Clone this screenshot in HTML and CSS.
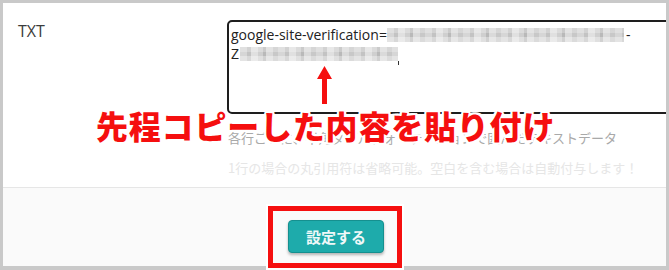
FILE: index.html
```html
<!DOCTYPE html>
<html lang="ja">
<head>
<meta charset="utf-8">
<link rel="stylesheet" href="styles.css">
</head>
<body>
<div class="page">
  <div class="frame">
    <div class="row">
      <div class="label">TXT</div>
      <div class="field">
        <div class="textarea">google-site-verification=<span class="blur b1"></span>-<br>Z<span class="blur b2"></span><span class="caret"></span></div>
        <p class="help">各行ごとに、半角ダブルクォーテーションで囲んだテキストデータ</p>
        <p class="help faint">1行の場合の丸引用符は省略可能。空白を含む場合は自動付与します！</p>
      </div>
    </div>
    <div class="footer">
      <button class="btn">設定する</button>
    </div>
  </div>
  <div class="annot-text">先程コピーした内容を貼り付け</div>
  <svg class="annot-arrow" width="15" height="38" viewBox="0 0 15 38">
    <polygon points="7.5,0 15,13 10,13 10,38 5,38 5,13 0,13" fill="#f50f0f"/>
  </svg>
  <div class="annot-box"></div>
</div>
</body>
</html>
```

FILE: styles.css
```css
* { box-sizing: border-box; }
html, body { margin: 0; padding: 0; background: #fff; }
.page {
  position: relative;
  width: 669px;
  height: 270px;
  overflow: hidden;
  font-family: "Open Sans", "Noto Sans CJK JP", sans-serif;
}
.frame {
  width: 669px;
  height: 270px;
  border: 3px solid #c9c9c9;
  border-bottom-width: 4px;
  background: #fff;
  overflow: hidden;
  display: flex;
  flex-direction: column;
}
.row {
  height: 184px;
  display: flex;
  padding: 17px 0 0 15px;
}
.label {
  width: 209px;
  flex: none;
  font-size: 16px;
  line-height: 18px;
  color: #3c3c3c;
  padding-top: 2px;
}
.field {
  flex: 1;
  min-width: 0;
}
.textarea {
  width: calc(100% + 12px);
  height: 94px;
  border: 2px solid #1e1e1e;
  border-radius: 5px;
  padding: 3px 2px;
  font-size: 14px;
  line-height: 19px;
  color: #222;
  white-space: nowrap;
  overflow: hidden;
}
.blur {
  display: inline-block;
  height: 14px;
  vertical-align: -2px;
  background:
    linear-gradient(0deg, rgba(255,255,255,0.35) 0 5px, rgba(0,0,0,0) 5px 9px, rgba(255,255,255,0.25) 9px),
    repeating-linear-gradient(90deg, #d6d6d6 0 7px, #c3c3c3 7px 11px, #e0e0e0 11px 18px, #cfcfcf 18px 23px, #b9b9b9 23px 26px, #dadada 26px 33px, #c8c8c8 33px 38px);
}
.b1 { width: 237px; margin-right: 2px; }
.b2 { width: 158px; margin-left: 1px; }
.caret {
  display: inline-block;
  width: 1px;
  height: 4px;
  background: #333;
  vertical-align: -6px;
}
.help {
  margin: 15px 0 0 1px;
  font-size: 13px;
  line-height: 18px;
  color: #a9a9a9;
  white-space: nowrap;
  font-family: "Noto Sans CJK JP", sans-serif;
}
.help.faint {
  margin-top: 12px;
  color: #e6e6e6;
}
.footer {
  flex: 1;
  border-top: 1px solid #e6e6e6;
  background: #fafafa;
  display: flex;
  justify-content: center;
  align-items: flex-start;
  padding-top: 32px;
}
.btn {
  width: 96px;
  height: 33px;
  margin-left: 3px;
  background: #1eabab;
  border: 1px solid #15908f;
  border-radius: 4px;
  box-shadow: 0 2px 3px rgba(0,0,0,0.28);
  color: #eef8f8;
  font-family: "Noto Sans CJK JP", sans-serif;
  font-weight: 700;
  font-size: 15px;
  padding: 0;
}
.annot-text {
  position: absolute;
  left: 96px;
  top: 105px;
  font-family: "Noto Sans CJK JP", sans-serif;
  font-weight: 900;
  font-size: 32px;
  line-height: 40px;
  letter-spacing: 0.8px;
  color: #f50f0f;
  white-space: nowrap;
  text-shadow:
    2px 0 0 #fff, -2px 0 0 #fff, 0 2px 0 #fff, 0 -2px 0 #fff,
    2px 2px 0 #fff, -2px -2px 0 #fff, 2px -2px 0 #fff, -2px 2px 0 #fff;
}
.annot-arrow {
  position: absolute;
  left: 317px;
  top: 66px;
}
.annot-box {
  position: absolute;
  left: 268px;
  top: 206px;
  width: 134px;
  height: 62px;
  border: 5px solid #f50f0f;
  box-shadow: 0 0 0 2px #fff;
}
```
